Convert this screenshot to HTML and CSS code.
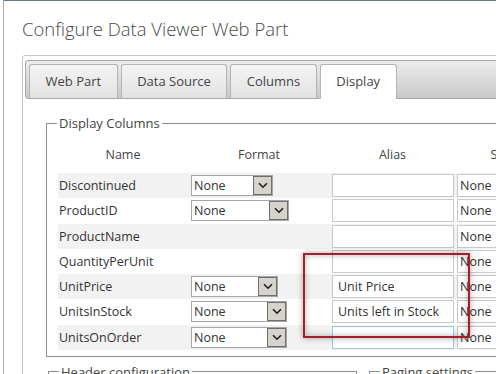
FILE: index.html
```html
<!DOCTYPE html>
<html lang="en">
<head>
    <meta charset="UTF-8">
    <title>Configure Data Viewer Web Part</title>
    <link rel="stylesheet" href="styles.css">
</head>
<body>
    <div class="dialog">
        <h1 class="dialog-title">Configure Data Viewer Web Part</h1>
        <div class="panel">
            <div class="tab-strip">
                <div class="tab">Web Part</div>
                <div class="tab">Data Source</div>
                <div class="tab">Columns</div>
                <div class="tab active">Display</div>
            </div>
            <div class="tab-body">
                <!-- Display columns -->
                <fieldset class="group columns-group">
                    <legend>Display Columns</legend>
                    <table class="columns-table">
                        <colgroup>
                            <col class="col-name">
                            <col class="col-format">
                            <col class="col-alias">
                            <col class="col-sort">
                        </colgroup>
                        <thead>
                            <tr><th>Name</th><th>Format</th><th>Alias</th><th>Sort</th></tr>
                        </thead>
                        <tbody>
                            <tr class="shaded">
                                <td>Discontinued</td>
                                <td><div class="combo w81"><span>None</span><span class="combo-btn"><svg width="10" height="7" viewBox="0 0 10 7"><path d="M1 1.2l4 4 4-4"/></svg></span></div></td>
                                <td><div class="alias-input"></div></td>
                                <td><div class="sort-select">None</div></td>
                            </tr>
                            <tr>
                                <td>ProductID</td>
                                <td><div class="combo w97"><span>None</span><span class="combo-btn"><svg width="10" height="7" viewBox="0 0 10 7"><path d="M1 1.2l4 4 4-4"/></svg></span></div></td>
                                <td><div class="alias-input"></div></td>
                                <td><div class="sort-select">None</div></td>
                            </tr>
                            <tr class="shaded">
                                <td>ProductName</td>
                                <td></td>
                                <td><div class="alias-input"></div></td>
                                <td><div class="sort-select">None</div></td>
                            </tr>
                            <tr>
                                <td>QuantityPerUnit</td>
                                <td></td>
                                <td><div class="alias-input"></div></td>
                                <td><div class="sort-select">None</div></td>
                            </tr>
                            <tr class="shaded">
                                <td>UnitPrice</td>
                                <td><div class="combo w86"><span>None</span><span class="combo-btn"><svg width="10" height="7" viewBox="0 0 10 7"><path d="M1 1.2l4 4 4-4"/></svg></span></div></td>
                                <td><div class="alias-input">Unit Price</div></td>
                                <td><div class="sort-select">None</div></td>
                            </tr>
                            <tr>
                                <td>UnitsInStock</td>
                                <td><div class="combo w95"><span>None</span><span class="combo-btn"><svg width="10" height="7" viewBox="0 0 10 7"><path d="M1 1.2l4 4 4-4"/></svg></span></div></td>
                                <td><div class="alias-input">Units left in Stock</div></td>
                                <td><div class="sort-select">None</div></td>
                            </tr>
                            <tr class="shaded">
                                <td>UnitsOnOrder</td>
                                <td><div class="combo w95"><span>None</span><span class="combo-btn"><svg width="10" height="7" viewBox="0 0 10 7"><path d="M1 1.2l4 4 4-4"/></svg></span></div></td>
                                <td><div class="alias-input focused"></div></td>
                                <td><div class="sort-select">None</div></td>
                            </tr>
                        </tbody>
                    </table>
                </fieldset>
                <div class="lower-groups">
                    <fieldset class="group header-group"><legend>Header configuration</legend></fieldset>
                    <fieldset class="group paging-group"><legend>Paging settings</legend></fieldset>
                </div>
            </div>
        </div>
        <!-- annotation box drawn over the alias column -->
        <div class="highlight"></div>
    </div>
</body>
</html>
```

FILE: styles.css
```css
:root {
    --text-dark: #333333;
    --text-title: #4a4a4a;
    --border-light: #c6c6c6;
    --border-mid: #8c8c8c;
    --row-shade: #f2f2f2;
}

html, body {
    margin: 0;
    padding: 0;
    overflow: hidden;
    background-color: #ffffff;
}

body {
    font-family: "Open Sans", "Noto Sans", sans-serif;
    font-size: 12.5px;
    color: var(--text-dark);
    width: 496px;
    height: 374px;
}

.dialog {
    position: relative;
    margin-left: 3px;
    border-left: 1px solid #a9a9a9;
    border-top: 1px solid #6d7a88;
    height: 373px;
}

.dialog-title {
    margin: 0;
    padding: 14px 0 12px 18px;
    height: 28px;
    line-height: 28px;
    font-size: 18.5px;
    font-weight: 300;
    color: var(--text-title);
    white-space: nowrap;
}

/* Outer rounded frame holding the tabs */
.panel {
    margin-left: 18px;
    width: 560px;
    height: 400px;
    border: 1px solid var(--border-light);
    border-radius: 3px;
    padding: 4px 0 0 2px;
}

.tab-strip {
    display: flex;
    align-items: flex-end;
    gap: 3px;
    height: 37px;
    padding: 0 3px;
    border: 1px solid #a8a8a8;
    border-radius: 3px;
    background: linear-gradient(#ececec, #c9c9c9);
}
.tab {
    height: 33px;
    line-height: 33px;
    padding: 0 15.5px;
    border: 1px solid #b4b4b4;
    border-bottom: none;
    border-radius: 3px 3px 0 0;
    background: linear-gradient(#f4f4f4, #e2e2e2);
    font-size: 13px;
    color: #444;
    white-space: nowrap;
}
.tab.active {
    background: #ffffff;
    height: 34px;
    margin-bottom: -1px;
    position: relative;
}

.tab-body {
    padding: 15px 0 0 21px;
}

/* Group boxes */
.group {
    margin: 0;
    padding: 3px 0 6px 11px;
    border: 1px solid var(--border-mid);
    border-radius: 0;
}
.group legend {
    padding: 0 2px;
    margin-left: -1px;
    font-size: 13px;
    line-height: 18px;
    color: #444;
}

.columns-table {
    border-collapse: collapse;
    table-layout: fixed;
    width: 492px;
}
.col-name { width: 130px; }
.col-format { width: 142px; }
.col-alias { width: 125px; }
.col-sort { width: 95px; }

.columns-table th {
    height: 38px;
    padding: 0;
    font-weight: normal;
    text-align: center;
    color: #444;
}
.columns-table td {
    height: 25.25px;
    padding: 0;
    vertical-align: middle;
    white-space: nowrap;
}
.columns-table td:first-child {
    padding-left: 1px;
}
.columns-table td:nth-child(2) {
    padding-left: 3px;
}
.columns-table td:nth-child(3) {
    padding-left: 2px;
}
.columns-table td:nth-child(4) {
    padding-left: 2px;
}
.columns-table tr.shaded td {
    background-color: var(--row-shade);
}

/* Format drop down */
.combo {
    display: flex;
    align-items: center;
    justify-content: space-between;
    height: 19px;
    border: 1px solid #a6a6a6;
    background: #ffffff;
}
.combo span:first-child {
    padding-left: 2px;
}
.combo.w81 { width: 80px; }
.combo.w86 { width: 85px; }
.combo.w95 { width: 94px; }
.combo.w97 { width: 96px; }
.combo-btn {
    display: flex;
    align-items: center;
    justify-content: center;
    width: 17px;
    height: 17px;
    border: 1px solid #6e6e6e;
    background: #d6d3cd;
}
.combo-btn path {
    fill: none;
    stroke: #1e1e1e;
    stroke-width: 1.6;
}

.alias-input {
    width: 115px;
    height: 21px;
    line-height: 21px;
    border: 1px solid #c8c8c8;
    background: #ffffff;
    padding-left: 5px;
}
.alias-input.focused {
    border-color: #9fc4e4;
}

.sort-select {
    width: 80px;
    height: 21px;
    line-height: 21px;
    border: 1px solid #c8c8c8;
    background: #ffffff;
    padding-left: 2px;
}

.lower-groups {
    display: flex;
    gap: 12px;
    margin: 6px 0 0 2px;
}
.header-group {
    width: 296px;
    height: 30px;
}
.paging-group {
    width: 200px;
    height: 30px;
}

/* Red annotation rectangle */
.highlight {
    position: absolute;
    left: 299px;
    top: 252px;
    width: 163px;
    height: 81px;
    border: 2px solid #a3202b;
    box-shadow: 0 0 6px rgba(0, 0, 0, 0.35), inset 0 0 6px rgba(0, 0, 0, 0.3);
}
```
